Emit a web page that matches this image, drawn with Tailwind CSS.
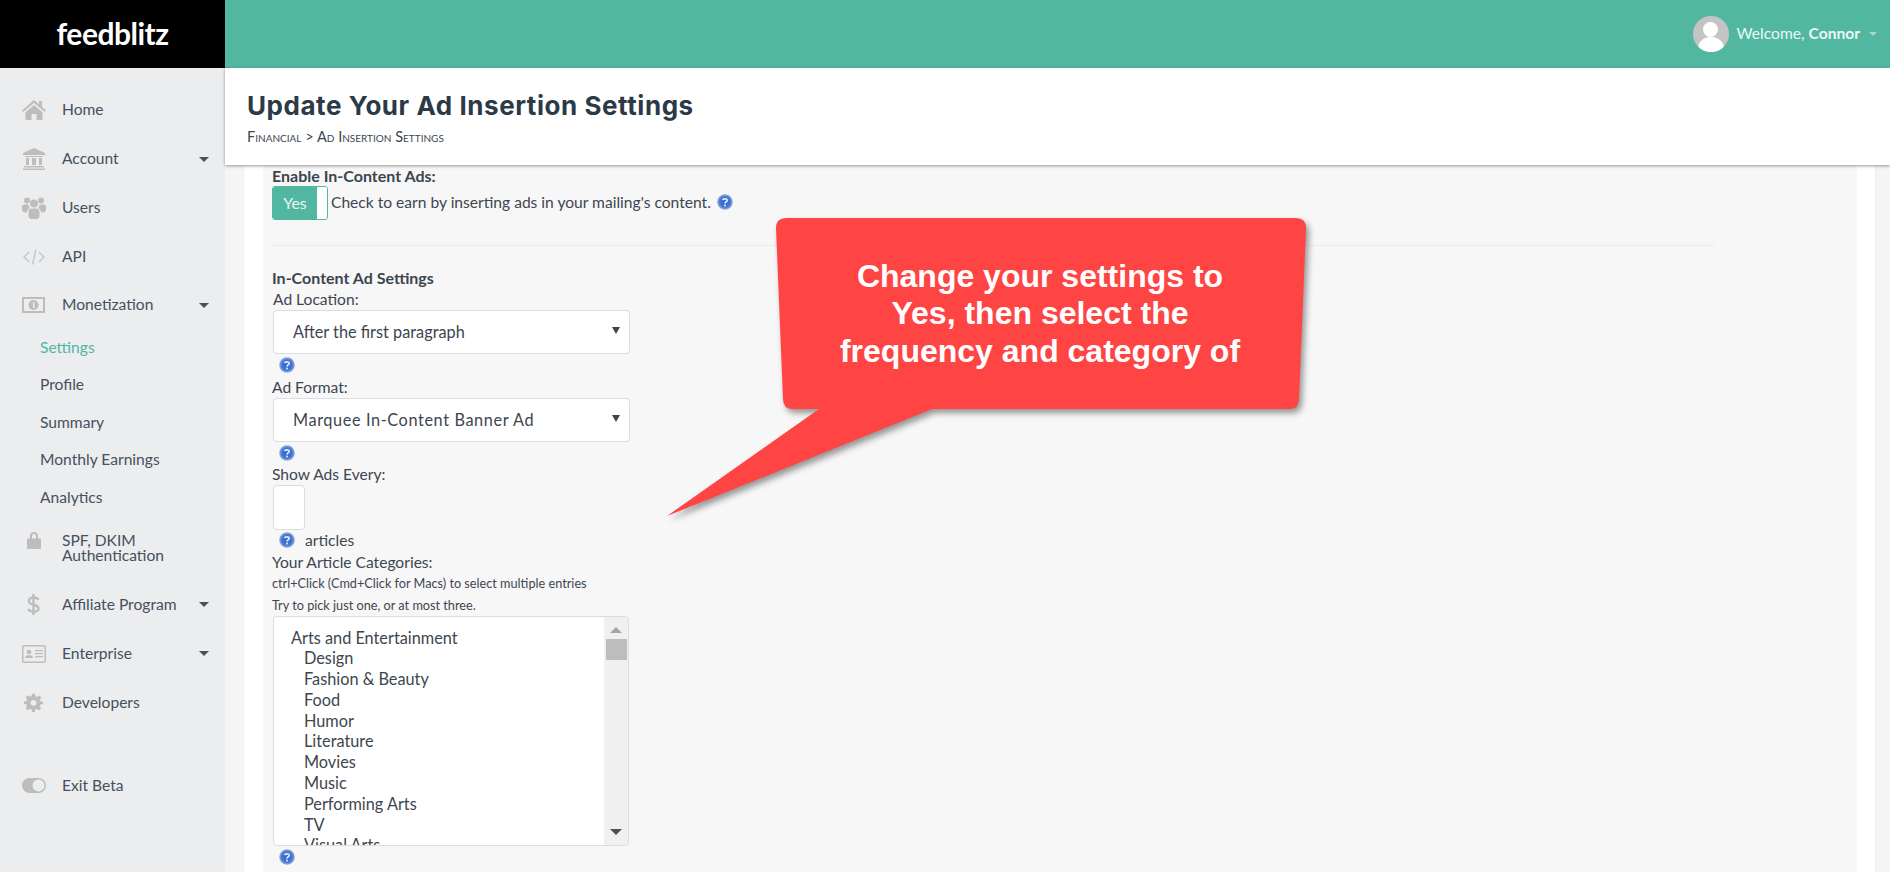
<!DOCTYPE html>
<html lang="en">
<head>
    <meta charset="UTF-8">
    <title>Update Your Ad Insertion Settings</title>
    <script src="https://cdn.jsdelivr.net/npm/@tailwindcss/browser@4"></script>
</head>
<body class="h-[872px] overflow-hidden bg-white font-['Lato',sans-serif] text-[15.6px] text-[#3d4650]">
    <svg class="absolute h-0 w-0">
        <defs>
            <radialGradient id="ball" cx="50%" cy="50%" r="55%">
                <stop offset="0" stop-color="#2c62c9"/>
                <stop offset="0.6" stop-color="#4277d6"/>
                <stop offset="1" stop-color="#b4c3dc"/>
            </radialGradient>
            <symbol id="help" viewBox="0 0 16 16">
                <circle cx="8" cy="8" r="7.800" fill="url(#ball)"/>
                <path d="M5.800 6.200C6 4.400 10.200 4.200 10.200 6.400 10.200 7.800 8 7.800 8 9.600" fill="none" stroke="#dfe8f8" stroke-width="1.800"/>
                <rect x="7.100" y="10.600" width="1.800" height="1.800" fill="#dfe8f8"/>
            </symbol>
        </defs>
    </svg>

    <div class="flex h-[872px]">
        <!-- Sidebar -->
        <aside class="w-[225px] shrink-0 bg-[#ecedef]">
            <div class="flex h-[68px] items-center justify-center bg-black pb-[2px]">
                <span class="font-['Lato',sans-serif] text-[30px] font-bold leading-none tracking-[-0.5px] text-white">feedblitz</span>
            </div>
            <nav class="pt-[17.500px] text-[#47505c]">
                <a class="flex h-[49px] items-center">
                    <span class="flex w-[62px] justify-center pl-[5px]">
                        <svg class="w-[26px] h-[22px]" viewBox="0 0 26 22" fill="#bdbdbd"><path d="M13 1 1 11.500l1.200 1.500L13 3.800 23.800 13l1.200-1.500-4-3.400V2h-3v3.500z"/><path d="M13 6 4.500 13.200V21h6v-6h5v6h6v-7.800z"/></svg>
                    </span>
                    <span>Home</span>
                </a>
                <a class="flex h-[49px] items-center">
                    <span class="flex w-[62px] justify-center pl-[5px]">
                        <svg class="w-[24px] h-[22px]" viewBox="0 0 24 22" fill="#bdbdbd"><path d="M12 0 1 5v2h22V5z"/><path d="M3 8h18v1H3zM4 10h3v7H4zM10 10h4v7h-4zM17 10h3v7h-3zM2 18h20v1.500H2zM1 20.500h22V22H1z"/></svg>
                    </span>
                    <span>Account</span>
                    <span class="ml-auto mr-[16px] h-0 w-0 border-x-[5px] border-t-[5px] border-x-transparent border-t-[#47505c]"></span>
                </a>
                <a class="flex h-[49px] items-center">
                    <span class="flex w-[62px] justify-center pl-[5px]">
                        <svg class="w-[24px] h-[22px]" viewBox="0 0 24 22" fill="#bdbdbd"><circle cx="5" cy="3.500" r="3"/><circle cx="19" cy="3.500" r="3"/><circle cx="12" cy="6.500" r="4"/><path d="M0 9.500C0 8 1.500 7.500 3 7.500h3.500C6.500 10 8 11 8 11c-2.500 1-3 3-3 4.500C1 15.500 0 14 0 12.500zM24 9.500C24 8 22.500 7.500 21 7.500h-3.500c0 2.500-1.500 3.500-1.500 3.500 2.500 1 3 3 3 4.500 4 0 5-1.500 5-3z"/><path d="M6.500 15c0-2 1.500-3.500 3-3.500h5c1.500 0 3 1.500 3 3.500v4c0 2-1.500 3-3 3h-5c-1.500 0-3-1-3-3z"/></svg>
                    </span>
                    <span>Users</span>
                </a>
                <a class="flex h-[49px] items-center">
                    <span class="flex w-[62px] justify-center pl-[5px]">
                        <svg class="w-[22px] h-[16px]" viewBox="0 0 22 16" fill="none" stroke="#c4c4c4" stroke-width="1.300"><path d="M6 3 1 8l5 5M16 3l5 5-5 5M13 0.500 9.500 15.500"/></svg>
                    </span>
                    <span>API</span>
                </a>
                <a class="flex h-[47px] items-center">
                    <span class="flex w-[62px] justify-center pl-[5px]">
                        <svg class="w-[23px] h-[16px]" viewBox="0 0 23 16"><rect width="23" height="16" fill="#bdbdbd"/><rect x="2" y="2" width="19" height="12" fill="#ecedef"/><circle cx="11.500" cy="8" r="5" fill="#bdbdbd"/><rect x="11" y="5" width="1.500" height="6" fill="#ecedef"/></svg>
                    </span>
                    <span>Monetization</span>
                    <span class="ml-auto mr-[16px] h-0 w-0 border-x-[5px] border-t-[5px] border-x-transparent border-t-[#47505c]"></span>
                </a>
                <div class="pl-[40px]">
                    <a class="flex h-[37.500px] items-center text-[#52b7a1]">Settings</a>
                    <a class="flex h-[37.500px] items-center">Profile</a>
                    <a class="flex h-[37.500px] items-center">Summary</a>
                    <a class="flex h-[37.500px] items-center">Monthly Earnings</a>
                    <a class="flex h-[37.500px] items-center">Analytics</a>
                </div>
                <a class="flex h-[64px] items-center">
                    <span class="flex w-[62px] justify-center pl-[5px] pb-[16px]">
                        <svg class="w-[14px] h-[18px]" viewBox="0 0 14 18" fill="#bdbdbd"><path d="M3 8V5a4 4 0 0 1 8 0v3H9V5a2 2 0 0 0-4 0v3z"/><rect y="7.500" width="14" height="10.500" rx="1"/></svg>
                    </span>
                    <span class="leading-[15px]">SPF, DKIM<br>Authentication</span>
                </a>
                <a class="flex h-[49px] items-center">
                    <span class="flex w-[62px] justify-center pl-[5px]">
                        <svg class="w-[13px] h-[21px]" viewBox="0 0 13 21" fill="none" stroke="#bdbdbd" stroke-width="2.400"><path d="M11.500 6C10.500 4 8.500 3.500 6.500 3.500 3.500 3.500 1.800 5 1.800 7c0 5 9.700 2.500 9.700 7.500 0 2-2 3.200-5 3.200-2.200 0-4.200-.8-5.300-2.700M6.500 0v21"/></svg>
                    </span>
                    <span>Affiliate Program</span>
                    <span class="ml-auto mr-[16px] h-0 w-0 border-x-[5px] border-t-[5px] border-x-transparent border-t-[#47505c]"></span>
                </a>
                <a class="flex h-[49px] items-center">
                    <span class="flex w-[62px] justify-center pl-[5px]">
                        <svg class="w-[24px] h-[18px]" viewBox="0 0 24 18" fill="#bdbdbd"><path d="M2 0h20a2 2 0 0 1 2 2v14a2 2 0 0 1-2 2H2a2 2 0 0 1-2-2V2a2 2 0 0 1 2-2zm0 1.500a.500.500 0 0 0-.500.500v14a.500.500 0 0 0 .500.500h20a.500.500 0 0 0 .500-.500V2a.500.500 0 0 0-.500-.500z"/><circle cx="7" cy="7" r="2.300"/><path d="M3 13c0-2 2-3 4-3s4 1 4 3zM13 5h8v1.300h-8zM13 8h8v1.300h-8zM13 11h8v1.300h-8z"/></svg>
                    </span>
                    <span>Enterprise</span>
                    <span class="ml-auto mr-[16px] h-0 w-0 border-x-[5px] border-t-[5px] border-x-transparent border-t-[#47505c]"></span>
                </a>
                <a class="flex h-[49px] items-center">
                    <span class="flex w-[62px] justify-center pl-[5px]">
                        <svg class="w-[19px] h-[19px]" viewBox="-1 -1 26 26" fill="#bdbdbd"><path fill-rule="evenodd" d="M10 0h4l.700 3.500 2.300 1 3-2 2.800 2.800-2 3 1 2.300L25 11v3l-3.500.700-1 2.300 2 3-2.800 2.800-3-2-2.300 1L14 25h-4l-.700-3.500-2.300-1-3 2L1.200 19.700l2-3-1-2.300L-1 14v-3l3.200-.700 1-2.300-2-3L4 2.200l3 2 2.300-1zM12 8.500a4 4 0 1 0 0 8 4 4 0 0 0 0-8z"/></svg>
                    </span>
                    <span>Developers</span>
                </a>
                <div class="ml-[23px] mr-[23px] mt-[17px] border-t border-[#eff0f2]"></div>
                <a class="mt-[16px] flex h-[49px] items-center">
                    <span class="flex w-[62px] justify-center pl-[5px]">
                        <svg class="w-[24px] h-[15px]" viewBox="0 0 24 15"><rect width="24" height="15" rx="7.500" fill="#bdbdbd"/><circle cx="16.500" cy="7.500" r="6" fill="#ecedef"/></svg>
                    </span>
                    <span>Exit Beta</span>
                </a>
                <div class="ml-[23px] mr-[23px] mt-[17px] border-t border-[#eff0f2]"></div>
            </nav>
        </aside>

        <!-- Main -->
        <div class="relative min-w-0 flex-1">
            <header class="flex h-[68px] items-center justify-end bg-[#52b7a1] pr-[13px] text-[#eaf7f4]">
                <span class="relative mr-[8px] h-[36px] w-[36px] overflow-hidden rounded-full bg-[#c4c4c4]">
                    <span class="absolute left-[10px] top-[6px] h-[15px] w-[15px] rounded-full bg-white"></span>
                    <span class="absolute left-[5px] top-[21px] h-[24px] w-[26px] rounded-full bg-white"></span>
                </span>
                <span>Welcome, <b class="font-bold">Connor</b></span>
                <span class="ml-[9px] h-0 w-0 border-x-[4px] border-t-[4px] border-x-transparent border-t-[#a3d9cc]"></span>
            </header>

            <div class="relative z-10 h-[97px] bg-white pl-[22px] pt-[20px] shadow-[0_1px_3px_rgba(0,0,0,0.4)]">
                <h1 class="font-['Inter',sans-serif] text-[26px] font-bold leading-[36px] tracking-[0.55px] text-[#2c3a47]">Update Your Ad Insertion Settings</h1>
                <p class="mt-[6px] text-[14.600px] leading-[14px] text-[#3d4650] [font-variant:small-caps]">Financial &gt; Ad Insertion Settings</p>
            </div>

            <div class="h-[707px] overflow-hidden bg-[#f5f5f5] pl-[18px] pr-[14px]">
                <div class="h-full border-l border-r border-[#eeeeee] bg-white pl-[19px] pr-[18px]">
                    <div class="h-full bg-[#f7f7f7] pl-[9px]">
                        <div class="text-[16px] font-bold leading-[19px] pt-[1px] text-[#3a4550]">Enable In-Content Ads:</div>
                        <div class="mt-[1px] flex items-center">
                            <span class="flex h-[34px] w-[56px] overflow-hidden rounded-[3px] border border-[#52b7a1]">
                                <span class="flex w-[44px] items-center justify-center bg-[#52b7a1] text-[16px] text-[#eaf7f4]">Yes</span>
                                <span class="flex-1 bg-white"></span>
                            </span>
                            <span class="ml-[3px]">Check to earn by inserting ads in your mailing's content.</span>
                            <svg class="ml-[6px] mb-[3px] h-[16px] w-[16px]"><use href="#help"/></svg>
                        </div>
                        <div class="mt-[25px] mr-[142px] border-t border-[#ececec]"></div>

                        <div class="mt-[22px] text-[16px] font-bold leading-[19px] text-[#3a4550]">In-Content Ad Settings</div>
                        <div class="mt-[2px] pl-[1px] leading-[21px]">Ad Location:</div>
                        <div class="ml-[1px] flex h-[44px] w-[357px] items-center justify-between rounded-[4px] border border-[#dddddd] bg-white pl-[19px] pr-[9px]">
                            <span class="text-[16.300px]">After the first paragraph</span>
                            <span class="mb-[4px] h-0 w-0 border-x-[4px] border-t-[7px] border-x-transparent border-t-[#444]"></span>
                        </div>
                        <svg class="ml-[7px] mt-[3px] block h-[16px] w-[16px]"><use href="#help"/></svg>
                        <div class="mt-[3px] leading-[22px]">Ad Format:</div>
                        <div class="ml-[1px] flex h-[44px] w-[357px] items-center justify-between rounded-[4px] border border-[#dddddd] bg-white pl-[19px] pr-[9px]">
                            <span class="text-[16.300px] tracking-[0.6px]">Marquee In-Content Banner Ad</span>
                            <span class="mb-[4px] h-0 w-0 border-x-[4px] border-t-[7px] border-x-transparent border-t-[#444]"></span>
                        </div>
                        <svg class="ml-[7px] mt-[3px] block h-[16px] w-[16px]"><use href="#help"/></svg>
                        <div class="mt-[3px] leading-[21px]">Show Ads Every:</div>
                        <div class="ml-[1px] h-[45px] w-[32px] rounded-[4px] border border-[#dddddd] bg-white"></div>
                        <div class="flex h-[21px] items-center">
                            <svg class="ml-[7px] mb-[1px] h-[16px] w-[16px]"><use href="#help"/></svg>
                            <span class="ml-[10px]">articles</span>
                        </div>
                        <div class="leading-[22px]">Your Article Categories:</div>
                        <div class="text-[12.700px] leading-[21.500px]">ctrl+Click (Cmd+Click for Macs) to select multiple entries</div>
                        <div class="text-[12.700px] leading-[21.500px]">Try to pick just one, or at most three.</div>
                        <div class="relative ml-[1px] flex h-[230px] w-[356px] overflow-hidden rounded-[4px] border border-[#dddddd] bg-white">
                            <div class="flex-1 pl-[17px] pt-[10.500px] text-[16.300px] leading-[20.800px]">
                                <div>Arts and Entertainment</div>
                                <div class="pl-[13px]">Design</div>
                                <div class="pl-[13px]">Fashion &amp; Beauty</div>
                                <div class="pl-[13px]">Food</div>
                                <div class="pl-[13px]">Humor</div>
                                <div class="pl-[13px]">Literature</div>
                                <div class="pl-[13px]">Movies</div>
                                <div class="pl-[13px]">Music</div>
                                <div class="pl-[13px]">Performing Arts</div>
                                <div class="pl-[13px]">TV</div>
                                <div class="pl-[13px]">Visual Arts</div>
                            </div>
                            <div class="flex w-[24px] flex-col items-center bg-[#f0f0f0]">
                                <span class="mt-[10px] h-0 w-0 border-x-[6px] border-b-[6px] border-x-transparent border-b-[#a3a3a3]"></span>
                                <span class="mt-[6px] h-[21px] w-[21px] bg-[#bdbdbd]"></span>
                                <span class="mt-auto mb-[10px] h-0 w-0 border-x-[6px] border-t-[6px] border-x-transparent border-t-[#505050]"></span>
                            </div>
                        </div>
                        <svg class="ml-[7px] mt-[3px] block h-[16px] w-[16px]"><use href="#help"/></svg>
                    </div>
                </div>
            </div>
        </div>
    </div>

    <!-- Callout -->
    <svg class="absolute left-[660px] top-[210px] z-20 h-[320px] w-[660px] drop-shadow-[3px_4px_3px_rgba(0,0,0,0.4)]" viewBox="660 210 660 320">
        <path fill="#ff4444" d="M786 218H1296Q1306 218 1306 228L1299 399Q1299 409 1289 409H932L667 516 819 409H793Q783 409 783 399L776 228Q776 218 786 218Z"/>
    </svg>
    <div class="absolute left-[777px] top-[258px] z-30 w-[526px] text-center font-['Liberation_Sans',sans-serif] text-[32px] font-bold leading-[37.400px] text-white">
        Change your settings to<br>Yes, then select the<br>frequency and category of
    </div>
</body>
</html>
